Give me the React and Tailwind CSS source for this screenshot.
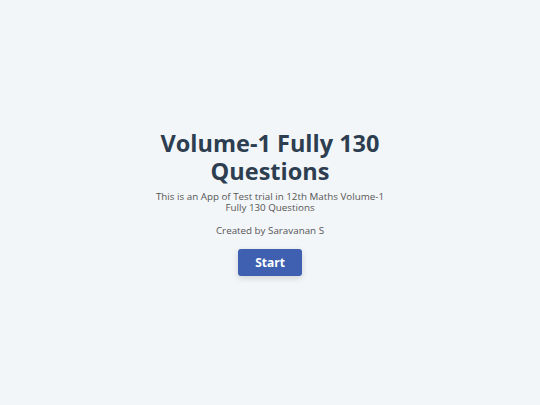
import React from 'react';

export default function App() {
  return (
    <div className="min-h-screen w-full bg-[#f3f6f9] flex items-center justify-center font-['Open_Sans',sans-serif]">
      <div className="w-[240px] flex flex-col items-center text-center">
        <h1 className="text-[23.5px] leading-[28px] font-bold text-[#2c3e50]">Volume-1 Fully 130 Questions</h1>
        <p className="mt-[6px] text-[9.8px] leading-[11px] text-[#555]">
          This is an App of Test trial in 12th Maths Volume-1 Fully 130 Questions
        </p>
        <p className="mt-[12px] text-[9.8px] leading-[11px] text-[#555]">Created by Saravanan S</p>
        <button className="mt-[13px] w-[64px] h-[27px] rounded-[3px] bg-[#3f5fb0] text-white text-[12px] font-bold shadow-[0_2px_6px_rgba(0,0,0,0.15)]">
          Start
        </button>
      </div>
    </div>
  );
}
